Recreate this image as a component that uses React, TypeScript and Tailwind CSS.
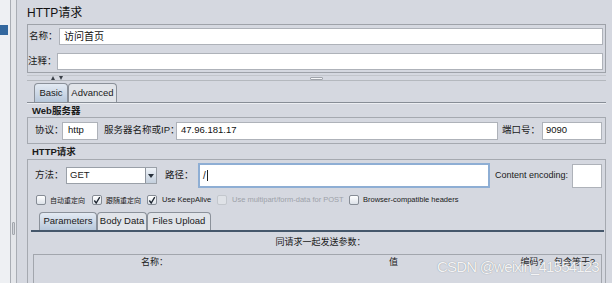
import { ReactNode } from 'react';

function Field({ className = '', children }: { className?: string; children?: ReactNode }) {
  return (
    <div className={`flex shrink-0 items-center whitespace-nowrap border border-[#aeb2b9] bg-white text-[9.5px] text-[#111] ${className}`}>
      {children}
    </div>
  );
}

function Check({ checked = false, disabled = false }: { checked?: boolean; disabled?: boolean }) {
  return (
    <span
      className={
        disabled
          ? 'flex h-[10px] w-[10px] shrink-0 rounded-[2px] border border-[#c3c7cd] bg-[#dfe2e7]'
          : 'flex h-[10px] w-[10px] shrink-0 items-center justify-center rounded-[2px] border border-[#868c95] bg-[linear-gradient(#ffffff,#dde2e9)]'
      }
    >
      {checked ? (
        <svg width="9" height="9" viewBox="0 0 9 9">
          <path d="M1.5 4.5 L3.6 7.3 L7.6 0.8" fill="none" stroke="#1d2530" strokeWidth="1.5" />
        </svg>
      ) : null}
    </span>
  );
}

function Tab({ label, active = false, className = '' }: { label: string; active?: boolean; className?: string }) {
  return (
    <div
      className={`flex h-full shrink-0 items-center justify-center whitespace-nowrap rounded-t-[4px] border border-b-0 border-[#8b919a] text-[9.5px] text-[#1a1a1a] ${
        active ? 'bg-[linear-gradient(#e3eaf3,#b8c8db)]' : 'bg-[#e1e4e9]'
      } ${className}`}
    >
      {label}
    </div>
  );
}

export default function App() {
  return (
    <div className="relative flex h-[283px] w-[612px] overflow-hidden bg-[#d5d8e0] font-['Liberation_Sans','Noto_Sans_CJK_SC',sans-serif] text-[#1a1a1a]">
      {/* tree edge on the left */}
      <div className="flex w-[17px] shrink-0">
        <div className="w-[10px] bg-[#eef0f3]">
          <div className="mt-[25px] h-[10px] w-[8px] bg-[#33689e]" />
        </div>
        <div className="w-[7px] border-x border-[#a9adb4] bg-[#e4e6ea]">
          <div className="ml-[1px] mt-[222px] h-[13px] w-[3px] rounded-[1px] border border-[#a2a6ad] bg-[#d2d5db]" />
        </div>
      </div>

      <div className="flex min-w-0 flex-1 flex-col pl-[10px] pr-[6px]">
        <div className="flex h-[24px] shrink-0 items-center pt-[2px] text-[12px] text-[#111]">HTTP请求</div>

        {/* name / comment */}
        <div className="flex h-[49px] shrink-0 flex-col border border-[#9ea2a9] pr-[2px] pt-[3px] text-[9.5px]">
          <div className="flex h-[17px] items-center">
            <span className="w-[31px] shrink-0 whitespace-nowrap pl-[1px]">名称：</span>
            <Field className="h-[17px] flex-1 pl-[4px] text-[10px]">访问首页</Field>
          </div>
          <div className="mt-[8px] flex h-[17px] items-center">
            <span className="w-[29px] shrink-0 whitespace-nowrap">注释：</span>
            <Field className="h-[17px] flex-1" />
          </div>
        </div>

        {/* splitter */}
        <div className="h-[2px] shrink-0" />
        <div className="h-[1px] shrink-0 bg-[#c3c6cc]" />
        <div className="flex h-[4px] shrink-0 items-center">
          <svg className="ml-[24px]" width="12" height="4" viewBox="0 0 12 4">
            <path d="M0 4 L2 0 L4 4 Z" fill="#3b4048" />
            <path d="M8 0 L12 0 L10 4 Z" fill="#3b4048" />
          </svg>
          <div className="ml-[247px] h-[3px] w-[13px] rounded-[1px] border border-[#a0a4ab] bg-[#f4f5f7]" />
        </div>
        <div className="h-[1px] shrink-0 bg-[#b4b8be]" />
        <div className="h-[1px] shrink-0" />

        {/* Basic / Advanced tabs */}
        <div className="flex h-[20px] shrink-0 items-end pl-[7px] pt-[1px]">
          <Tab label="Basic" active className="w-[34px]" />
          <Tab label="Advanced" className="w-[49px]" />
        </div>
        <div className="h-[1px] shrink-0 bg-[#878d96]" />
        <div className="h-[1px] shrink-0 bg-[#eceef2]" />

        <div className="flex h-[13px] shrink-0 items-center pl-[5px] pt-[1px] text-[9.5px] font-bold">Web服务器</div>
        <div className="flex h-[27px] shrink-0 items-center whitespace-nowrap border border-[#a5a9b0] pr-[3px] text-[9.5px]">
          <span className="ml-[7px] w-[27px] shrink-0">协议：</span>
          <Field className="h-[18px] w-[36px] pl-[5px]">http</Field>
          <span className="ml-[6px] w-[72px] shrink-0">服务器名称或IP：</span>
          <Field className="h-[18px] flex-1 shrink pl-[4px]">47.96.181.17</Field>
          <span className="ml-[4px] w-[40px] shrink-0">端口号：</span>
          <Field className="h-[18px] w-[60px] pl-[3px]">9090</Field>
        </div>

        <div className="flex h-[15px] shrink-0 items-center pl-[5px] pt-[1px] text-[9.5px] font-bold">HTTP请求</div>
        <div className="flex flex-1 flex-col border border-[#a5a9b0] pt-[3px]">
          <div className="flex h-[25px] shrink-0 items-center whitespace-nowrap pr-[3px] text-[9.5px]">
            <span className="ml-[7px] w-[31px] shrink-0">方法：</span>
            <div className="flex h-[17px] w-[91px] shrink-0 items-center border border-[#9aa0a8] bg-white">
              <span className="flex-1 pl-[3px] text-[9.5px]">GET</span>
              <span className="flex h-full w-[11px] items-center justify-center border-l border-[#8e949d] bg-[linear-gradient(#eef2f7,#c3cfdd)]">
                <svg width="6" height="4" viewBox="0 0 6 4">
                  <path d="M0 0 L6 0 L3 4 Z" fill="#27303b" />
                </svg>
              </span>
            </div>
            <span className="ml-[8px] w-[33px] shrink-0">路径：</span>
            <div className="flex h-[25px] min-w-0 flex-1 items-center border-2 border-[#8eaed4] bg-white pl-[3px] text-[10px]">
              <span>/</span>
              <span className="ml-[1px] h-[11px] w-[1px] bg-[#222]" />
            </div>
            <span className="ml-[5px] w-[77px] shrink-0 text-[9px]">Content encoding:</span>
            <Field className="h-[24px] w-[30px]" />
          </div>

          <div className="mt-[7px] flex h-[10px] shrink-0 items-center whitespace-nowrap text-[7.5px] leading-none">
            <span className="ml-[8px]" />
            <Check />
            <span className="ml-[4px] w-[37px] shrink-0 text-[7px]">自动重定向</span>
            <span className="ml-[5px]" />
            <Check checked />
            <span className="ml-[4px] w-[37px] shrink-0 text-[7px]">跟随重定向</span>
            <span className="ml-[4px]" />
            <Check checked />
            <span className="ml-[5px] w-[50px] shrink-0">Use KeepAlive</span>
            <span className="ml-[5px]" />
            <Check disabled />
            <span className="ml-[5px] w-[111px] shrink-0 text-[#9da2a9]">Use multipart/form-data for POST</span>
            <span className="ml-[6px]" />
            <Check />
            <span className="ml-[4px]">Browser-compatible headers</span>
          </div>

          {/* parameters tabbed pane */}
          <div className="ml-[3px] mr-[1px] mt-[7px] flex flex-1 flex-col">
            <div className="flex h-[18px] shrink-0 pl-[8px]">
              <Tab label="Parameters" active className="w-[58px]" />
              <Tab label="Body Data" className="w-[50px]" />
              <Tab label="Files Upload" className="w-[64px]" />
            </div>
            <div className="h-[2px] shrink-0 bg-[#45576b]" />
            <div className="flex h-[22px] shrink-0 items-center justify-center pl-[6px] text-[9px]">同请求一起发送参数：</div>
            <div className="mx-[2px] flex h-[40px] shrink-0 border border-[#a2a6ad] text-[9px]">
              <div className="flex h-[16px] w-full items-center whitespace-nowrap">
                <span className="w-[237px] shrink-0 pl-[4px] text-center">名称：</span>
                <span className="w-[245px] shrink-0 text-center">值</span>
                <span className="w-[32px] shrink-0 text-center">编码?</span>
                <span className="flex-1 text-center">包含等于?</span>
              </div>
            </div>
          </div>
        </div>
      </div>

      {/* watermark */}
      <div className="absolute left-[437px] top-[256px] whitespace-nowrap text-[15px] tracking-[-0.8px] text-white/90 [text-shadow:0_0_1px_#7b8088]">
        CSDN @weixin_41554123
      </div>
    </div>
  );
}
